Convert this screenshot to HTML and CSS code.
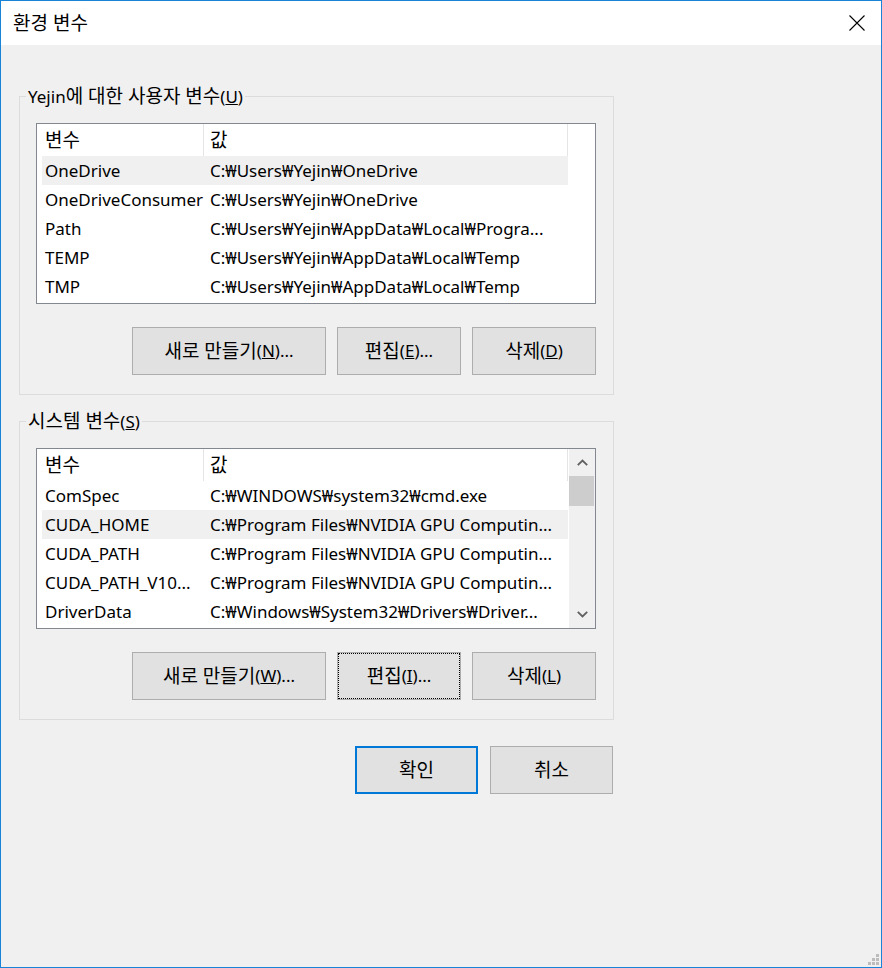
FILE: index.html
```html
<!DOCTYPE html>
<html lang="ko">
<head>
<meta charset="utf-8">
<title>환경 변수</title>
<link rel="stylesheet" href="styles.css">
</head>
<body>
<div class="window">
  <div class="titlebar">
    <span class="title ko">환경 변수</span>
    <svg class="close" width="16" height="16" viewBox="0 0 16 16"><path d="M0.5 0.5 L15.5 15.5 M15.5 0.5 L0.5 15.5" stroke="#000" stroke-width="1.1" fill="none"/></svg>
  </div>
  <div class="content">
    <section class="group first">
      <div class="group-label">Yejin<span class="ko">에 대한 사용자 변수</span>(<u>U</u>)</div>
      <div class="list">
        <div class="rows">
          <div class="row head"><span class="c1 ko">변수</span><span class="c2 ko">값</span></div>
          <div class="row hl"><span class="c1">OneDrive</span><span class="c2">C:₩Users₩Yejin₩OneDrive</span></div>
          <div class="row"><span class="c1">OneDriveConsumer</span><span class="c2">C:₩Users₩Yejin₩OneDrive</span></div>
          <div class="row"><span class="c1">Path</span><span class="c2">C:₩Users₩Yejin₩AppData₩Local₩Progra...</span></div>
          <div class="row"><span class="c1">TEMP</span><span class="c2">C:₩Users₩Yejin₩AppData₩Local₩Temp</span></div>
          <div class="row"><span class="c1">TMP</span><span class="c2">C:₩Users₩Yejin₩AppData₩Local₩Temp</span></div>
        </div>
      </div>
      <div class="buttons">
        <div class="btn wide"><span class="ko">새로 만들기</span>(<u>N</u>)...</div>
        <div class="btn"><span class="ko">편집</span>(<u>E</u>)...</div>
        <div class="btn"><span class="ko">삭제</span>(<u>D</u>)</div>
      </div>
    </section>

    <section class="group second">
      <div class="group-label"><span class="ko">시스템 변수</span>(<u>S</u>)</div>
      <div class="list">
        <div class="rows">
          <div class="row head"><span class="c1 ko">변수</span><span class="c2 ko">값</span></div>
          <div class="row"><span class="c1">ComSpec</span><span class="c2">C:₩WINDOWS₩system32₩cmd.exe</span></div>
          <div class="row hl"><span class="c1">CUDA_HOME</span><span class="c2">C:₩Program Files₩NVIDIA GPU Computin...</span></div>
          <div class="row"><span class="c1">CUDA_PATH</span><span class="c2">C:₩Program Files₩NVIDIA GPU Computin...</span></div>
          <div class="row"><span class="c1">CUDA_PATH_V10...</span><span class="c2">C:₩Program Files₩NVIDIA GPU Computin...</span></div>
          <div class="row"><span class="c1">DriverData</span><span class="c2">C:₩Windows₩System32₩Drivers₩Driver...</span></div>
        </div>
        <div class="scrollbar">
          <div class="arrow"><svg width="11" height="7" viewBox="0 0 11 7"><polyline points="0.8,6.2 5.5,1.5 10.2,6.2" stroke="#606060" stroke-width="1.8" fill="none"/></svg></div>
          <div class="thumb"></div>
          <div class="track"></div>
          <div class="arrow"><svg width="11" height="7" viewBox="0 0 11 7"><polyline points="0.8,0.8 5.5,5.5 10.2,0.8" stroke="#606060" stroke-width="1.8" fill="none"/></svg></div>
        </div>
      </div>
      <div class="buttons">
        <div class="btn wide"><span class="ko">새로 만들기</span>(<u>W</u>)...</div>
        <div class="btn focus"><span class="ko">편집</span>(<u>I</u>)...</div>
        <div class="btn"><span class="ko">삭제</span>(<u>L</u>)</div>
      </div>
    </section>

    <div class="dialog-buttons">
      <div class="btn small default"><span class="ko">확인</span></div>
      <div class="btn small"><span class="ko">취소</span></div>
    </div>
  </div>
  <svg class="grip" width="12" height="12" viewBox="0 0 12 12">
    <rect x="8" y="0" width="3" height="3" fill="#bcbcbc"/>
    <rect x="4" y="4" width="3" height="3" fill="#bcbcbc"/>
    <rect x="8" y="4" width="3" height="3" fill="#bcbcbc"/>
    <rect x="0" y="8" width="3" height="3" fill="#bcbcbc"/>
    <rect x="4" y="8" width="3" height="3" fill="#bcbcbc"/>
    <rect x="8" y="8" width="3" height="3" fill="#bcbcbc"/>
  </svg>
</div>
</body>
</html>
```

FILE: styles.css
```css
html, body {
  margin: 0;
  padding: 0;
  background: #f0f0f0;
}

body {
  font-family: "Noto Sans", "Noto Sans CJK KR", sans-serif;
  font-size: 17px;
  color: #000;
}

.ko {
  font-size: 19px;
}

.window {
  position: relative;
  width: 882px;
  height: 968px;
  box-sizing: border-box;
  border: 1px solid #1883d7;
  background: #f0f0f0;
}

.titlebar {
  height: 44px;
  background: #fff;
  display: flex;
  align-items: center;
  justify-content: space-between;
  padding: 0 16px 0 12px;
}

.title {
  line-height: 24px;
}

.close {
  display: block;
  margin-top: -1px;
}

.content {
  padding: 0 0 0 18px;
}

.group {
  width: 595px;
  box-sizing: border-box;
  padding: 0 17px 19px 16px;
  border: 1px solid #dcdcdc;
}

.group.first {
  margin-top: 51px;
}

.group.second {
  margin-top: 26px;
}

.group-label {
  width: max-content;
  margin: -11px 0 0 -10px;
  padding: 0 2px;
  height: 20px;
  line-height: 20px;
  background: #f0f0f0;
  white-space: nowrap;
}

.list {
  margin-top: 17px;
  height: 181px;
  box-sizing: border-box;
  border: 1px solid #828790;
  background: #fff;
  display: flex;
  padding-left: 5px;
}

.rows {
  width: 526px;
  display: flex;
  flex-direction: column;
}

.row {
  height: 29px;
  display: flex;
  align-items: center;
  white-space: nowrap;
}

.row.head {
  height: 32px;
}

.row.hl {
  background: #f0f0f0;
}

.c1, .c2 {
  overflow: hidden;
  box-sizing: border-box;
  line-height: 26px;
}

.c1 {
  width: 162px;
  padding-left: 3px;
}

.c2 {
  width: 364px;
  padding-left: 6px;
}

.head .c1,
.head .c2 {
  height: 100%;
  display: flex;
  align-items: center;
  border-right: 1px solid #e5e5e5;
}

.scrollbar {
  width: 26px;
  margin-left: 1px;
  background: #f0f0f0;
  display: flex;
  flex-direction: column;
}

.arrow {
  height: 27px;
  display: flex;
  align-items: center;
  justify-content: center;
}

.arrow svg {
  display: block;
}

.thumb {
  height: 30px;
  margin-right: 1px;
  background: #cdcdcd;
}

.track {
  flex: 1;
}

.buttons {
  margin-top: 23px;
  display: flex;
  justify-content: flex-end;
  gap: 11px;
}

.btn {
  width: 124px;
  height: 48px;
  box-sizing: border-box;
  border: 1px solid #adadad;
  background: #e1e1e1;
  display: flex;
  align-items: center;
  justify-content: center;
  line-height: 24px;
  white-space: nowrap;
}

.btn.wide {
  width: 194px;
}

.btn.focus {
  outline: 1px dotted #000;
  outline-offset: -2px;
}

.btn.small {
  width: 123px;
}

.btn.default {
  border: 2px solid #0078d7;
}

.dialog-buttons {
  width: 595px;
  margin-top: 26px;
  display: flex;
  justify-content: flex-end;
  gap: 12px;
  padding-right: 1px;
  box-sizing: border-box;
}

.grip {
  position: absolute;
  right: 1px;
  bottom: 1px;
  display: block;
}
```
